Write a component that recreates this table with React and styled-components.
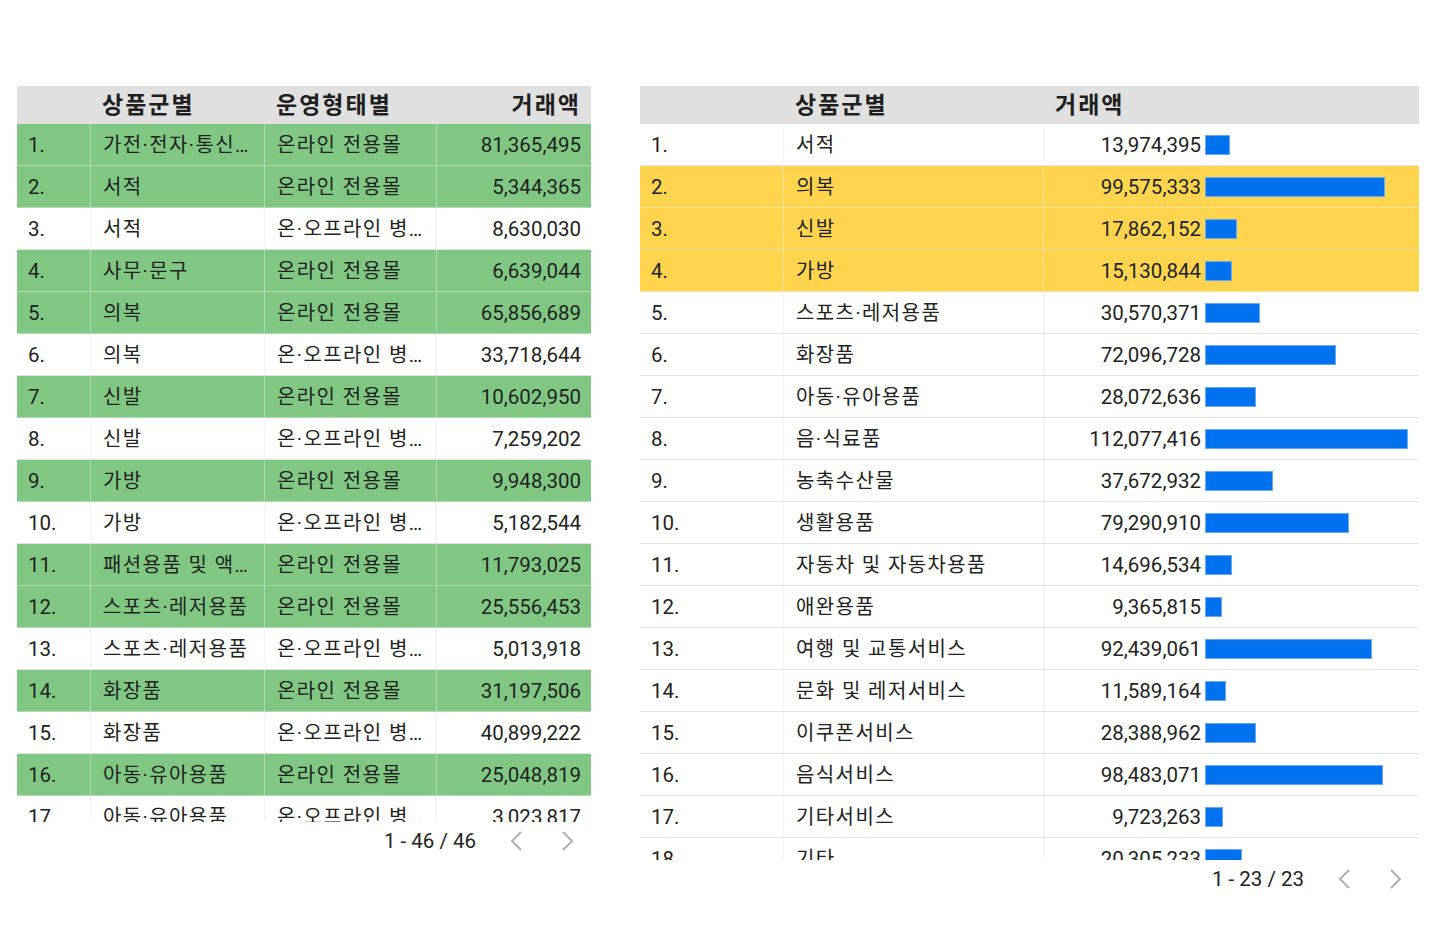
import React from "react"
import styled, { createGlobalStyle } from "styled-components"

const GlobalStyle = createGlobalStyle`
  body {
    margin: 0;
    background: #ffffff;
    font-family: "Roboto", "Noto Sans CJK KR", sans-serif;
    color: #212121;
  }
`

const leftRows = [
  ["가전·전자·통신기기", "온라인 전용몰", "81,365,495"],
  ["서적", "온라인 전용몰", "5,344,365"],
  ["서적", "온·오프라인 병행몰", "8,630,030"],
  ["사무·문구", "온라인 전용몰", "6,639,044"],
  ["의복", "온라인 전용몰", "65,856,689"],
  ["의복", "온·오프라인 병행몰", "33,718,644"],
  ["신발", "온라인 전용몰", "10,602,950"],
  ["신발", "온·오프라인 병행몰", "7,259,202"],
  ["가방", "온라인 전용몰", "9,948,300"],
  ["가방", "온·오프라인 병행몰", "5,182,544"],
  ["패션용품 및 액세서리", "온라인 전용몰", "11,793,025"],
  ["스포츠·레저용품", "온라인 전용몰", "25,556,453"],
  ["스포츠·레저용품", "온·오프라인 병행몰", "5,013,918"],
  ["화장품", "온라인 전용몰", "31,197,506"],
  ["화장품", "온·오프라인 병행몰", "40,899,222"],
  ["아동·유아용품", "온라인 전용몰", "25,048,819"],
  ["아동·유아용품", "온·오프라인 병행몰", "3,023,817"],
]

const rightRows = [
  ["서적", 13974395],
  ["의복", 99575333],
  ["신발", 17862152],
  ["가방", 15130844],
  ["스포츠·레저용품", 30570371],
  ["화장품", 72096728],
  ["아동·유아용품", 28072636],
  ["음·식료품", 112077416],
  ["농축수산물", 37672932],
  ["생활용품", 79290910],
  ["자동차 및 자동차용품", 14696534],
  ["애완용품", 9365815],
  ["여행 및 교통서비스", 92439061],
  ["문화 및 레저서비스", 11589164],
  ["이쿠폰서비스", 28388962],
  ["음식서비스", 98483071],
  ["기타서비스", 9723263],
  ["기타", 20305233],
]

const maxValue = 112077416
const yellowSet = ["의복", "신발", "가방"]

const Chevron = ({ dir }) => (
  <svg width="14" height="22" viewBox="0 0 14 22">
    <polyline
      points={dir === "left" ? "12,2 3,11 12,20" : "2,2 11,11 2,20"}
      fill="none"
      stroke="#b0b0b0"
      strokeWidth="2"
    />
  </svg>
)

const Pager = ({ label }) => (
  <Pagination>
    <PageLabel>{label}</PageLabel>
    <PageButton>
      <Chevron dir="left" />
    </PageButton>
    <PageButton>
      <Chevron dir="right" />
    </PageButton>
  </Pagination>
)

const App = () => {
  return (
    <Page>
      <GlobalStyle />
      <Table $width={574}>
        <HeaderRow $cols="73px 174px 172px 155px">
          <HeadCell />
          <HeadCell>상품군별</HeadCell>
          <HeadCell>운영형태별</HeadCell>
          <HeadCell $align="right">거래액</HeadCell>
        </HeaderRow>
        <Body $height={698}>
          {leftRows.map((r, i) => {
            const tone = r[1] === "온라인 전용몰" ? "green" : null
            return (
              <Row key={i} $cols="73px 174px 172px 155px" $tone={tone}>
                <Cell>{i + 1}.</Cell>
                <Cell $ko>{r[0]}</Cell>
                <Cell $ko>{r[1]}</Cell>
                <Cell $align="right">{r[2]}</Cell>
              </Row>
            )
          })}
        </Body>
        <Pager label="1 - 46 / 46" />
      </Table>

      <Table $width={779}>
        <HeaderRow $cols="143px 260px 376px">
          <HeadCell />
          <HeadCell>상품군별</HeadCell>
          <HeadCell>거래액</HeadCell>
        </HeaderRow>
        <Body $height={736}>
          {rightRows.map((r, i) => {
            const tone = yellowSet.includes(r[0]) ? "yellow" : null
            return (
              <Row key={i} $cols="143px 260px 376px" $tone={tone}>
                <Cell>{i + 1}.</Cell>
                <Cell $ko>{r[0]}</Cell>
                <BarCell>
                  <Amount>{r[1].toLocaleString("en-US")}</Amount>
                  <BarTrack>
                    <Bar style={{ width: `${(r[1] / maxValue) * 100}%` }} />
                  </BarTrack>
                </BarCell>
              </Row>
            )
          })}
        </Body>
        <Pager label="1 - 23 / 23" />
      </Table>
    </Page>
  )
}

export default App

const Page = styled.div`
  display: flex;
  align-items: flex-start;
  gap: 49px;
  padding: 86px 0 0 17px;
`

const Table = styled.div`
  width: ${(p) => p.$width}px;
  display: flex;
  flex-direction: column;
`

const HeaderRow = styled.div`
  display: grid;
  grid-template-columns: ${(p) => p.$cols};
  height: 38px;
  background: #e0e0e0;
`

const HeadCell = styled.div`
  display: flex;
  align-items: center;
  justify-content: ${(p) => (p.$align === "right" ? "flex-end" : "flex-start")};
  padding: 0 10px 5px 12px;
  font-size: 23px;
  font-weight: 700;
  letter-spacing: 2px;
  color: #1f1f1f;
`

const Body = styled.div`
  height: ${(p) => p.$height}px;
  overflow: hidden;
`

const toneColors = {
  green: "#81c784",
  yellow: "#ffd54f",
}

const Row = styled.div`
  display: grid;
  grid-template-columns: ${(p) => p.$cols};
  height: 42px;
  box-sizing: border-box;
  background: ${(p) => (p.$tone ? toneColors[p.$tone] : "#ffffff")};
  border-bottom: 1px solid
    ${(p) => (p.$tone ? "rgba(240, 240, 240, 0.45)" : "#e3e3e3")};

  & > div + div {
    border-left: 1px solid
      ${(p) => (p.$tone ? "rgba(240, 240, 240, 0.45)" : "#f4f4f4")};
  }
`

const Cell = styled.div`
  display: block;
  padding: 0 ${(p) => (p.$align === "right" ? "10px" : "12px")} 0 11px;
  text-align: ${(p) => p.$align || "left"};
  line-height: 42px;
  font-size: ${(p) => (p.$ko ? "20px" : "20.5px")};
  letter-spacing: ${(p) => (p.$ko ? "1.4px" : "0")};
  color: #222222;
  white-space: nowrap;
  overflow: hidden;
  text-overflow: ellipsis;

  & + & {
    padding-left: 12px;
  }
`

const BarCell = styled.div`
  display: flex;
  align-items: center;
  padding: 0 11px 0 12px;
  gap: 4px;
`

const Amount = styled.span`
  width: 145px;
  flex-shrink: 0;
  text-align: right;
  font-size: 20.5px;
  color: #222222;
`

const BarTrack = styled.div`
  flex: 1;
  height: 20px;
  display: flex;
`

const Bar = styled.div`
  height: 20px;
  box-sizing: border-box;
  background: #0072f0;
  border: 1px solid #6aaaf2;
`

const Pagination = styled.div`
  height: 38px;
  display: flex;
  align-items: center;
  justify-content: flex-end;
  padding-right: 3px;
`

const PageLabel = styled.span`
  font-size: 20.5px;
  color: #222222;
  margin-right: 20px;
`

const PageButton = styled.div`
  width: 40px;
  height: 38px;
  display: flex;
  align-items: center;
  justify-content: center;

  & + & {
    margin-left: 12px;
  }
`
